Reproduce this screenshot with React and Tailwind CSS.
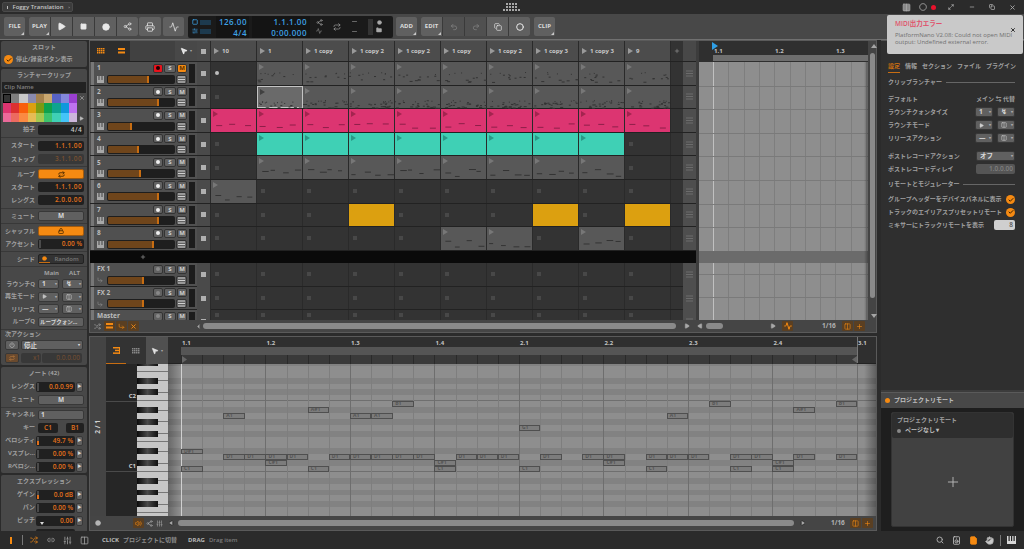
import React from 'react'
import { Play, Square, Circle, Printer, Undo2, Redo2, Copy, Search, Hand, File, X, Minus, Check, Plus, Repeat, SlidersVertical, Link2, Columns2, Maximize2, ChevronLeft, Volume2, Speaker, Share2, Activity, Folder, Power, Shuffle, CornerDownRight, MousePointer2, Lock } from 'lucide-react'

const ORANGE = '#f58a12'
const scenes = ['10', '1', '1 copy', '1 copy 2', '1 copy 2', '1 copy', '1 copy 2', '1 copy 3', '1 copy 3', '9']
const swatches = [
  '#333333', '#7f7f7f', '#c8c8c8', '#8a8aae', '#a5814c', '#c9a76f', '#5762c4', '#8488dc', '#9a3fd0',
  '#dc3571', '#dc3030', '#f95f0c', '#dca010', '#7b9a12', '#0ea24d', '#0fa38f', '#0f98dc', '#bf72f0',
  '#ea6a9a', '#ec6a60', '#fb8a42', '#e6bc55', '#a3c850', '#3cc36e', '#3fd0b5', '#44c4f8', '#cdb6dc',
]

// g grey clip, p pink, t teal, y yellow, s selected, c empty with dot, _ empty
const tracks = [
  { name: '1', vol: 62, cells: 'cggggggggg', rec: true, mute: true },
  { name: '2', vol: 78, cells: '_sgggggggg' },
  { name: '3', vol: 37, cells: 'pppppppppp' },
  { name: '4', vol: 47, cells: '_tttttttt_' },
  { name: '5', vol: 50, cells: '_gggggggg_' },
  { name: '6', vol: 78, cells: 'g_________' },
  { name: '7', vol: 78, cells: '___y___y_y' },
  { name: '8', vol: 70, cells: '_____gg_g_' },
]

const notes = [
  [0, 'D#1'], [0, 'C1'], [2, 'A1'], [2, 'D1'], [3, 'D1'], [4, 'D1'], [4, 'C#1'], [5, 'D1'], [6, 'C1'], [6, 'A#1'], [7, 'D1'],
  [8, 'A1'], [8, 'D1'], [9, 'A1'], [9, 'D1'], [10, 'B1'], [10, 'D1'], [11, 'D1'], [12, 'C#1'], [12, 'C1'], [13, 'D1'], [14, 'D1'], [15, 'D1'],
  [16, 'G1'], [16, 'C1'], [17, 'D1'], [19, 'D1'], [20, 'D1'], [20, 'C#1'], [22, 'D1'], [22, 'C1'], [23, 'A1'], [23, 'D1'], [24, 'D1'],
  [25, 'B1'], [26, 'D1'], [26, 'C1'], [27, 'D1'], [28, 'C#1'], [28, 'C1'], [29, 'A#1'], [29, 'D1'], [31, 'B1'], [31, 'D1'],
]
const pitchRow = { 'C1': 18, 'C#1': 17, 'D1': 16, 'D#1': 15, 'G1': 11, 'A1': 9, 'A#1': 8, 'B1': 7 }
const rows = Array.from({ length: 31 }, (_, i) => 30 - i) // F#2 at top
const isBlack = (p) => [1, 3, 6, 8, 10].includes(p % 12)

function rnd(n) {
  const v = Math.sin(n * 12.9898) * 43758.5453
  return v - Math.floor(v)
}

// little midi dashes inside a clip
function dashes(kind, seed, row) {
  const out = []
  const sparse = kind === 'p' || row === 4 || row === 7 || row === 5
  const n = kind === 'p' ? 3 : sparse ? 4 : row === 1 ? 26 : 12
  for (let i = 0; i < n; i++) {
    const a = rnd(seed * 31 + row * 7 + i), b = rnd(seed * 17 + row * 3 + i * 5)
    if (kind === 'p') out.push({ x: 2 + i * 15 + a * 4, y: 14 + b * 5, w: 6 })
    else if (sparse) out.push({ x: 2 + i * 11 + a * 4, y: 13 + b * 7, w: 4 + a * 3 })
    else if (row === 1) out.push({ x: a * 44, y: 14 + b * 8, w: 1 + Math.round(b * 2) })
    else out.push({ x: a * 44, y: 10 + b * 10, w: 1 + Math.round(b * 2) })
  }
  return out
}

function ClipTri({ color }) {
  return <svg width="6" height="7" viewBox="0 0 6 7" className="absolute left-[2px] top-[2px]"><polygon points="0,0 5,3 0,6" fill={color} /></svg>
}

function Clip({ kind, seed, row }) {
  if (kind === '_' || kind === 'c') {
    return (
      <div className="w-[46px] h-full shrink-0 flex items-center pl-[4px] bg-[#333333] border-r border-[#2a2a2a]">
        {kind === 'c'
          ? <span className="w-[4px] h-[4px] rounded-full bg-[#bdbdbd]" />
          : <span className="w-[4px] h-[4px] bg-[#484848]" />}
      </div>
    )
  }
  const styles = {
    g: ['bg-[#585858]', '#343434', '#777777'],
    s: ['bg-[#6a6a6a] border border-[#c4c4c4]', '#343434', '#404040'],
    p: ['bg-[#dc3571]', '#8e1f49', '#a3244f'],
    t: ['bg-[#3fd0b5]', '#2a8f7d', '#2a9a86'],
    y: ['bg-[#dca010]', '#9a7008', '#dca010'],
  }[kind]
  return (
    <div className={`relative w-[46px] h-full shrink-0 ${styles[0]} border-r border-[#2a2a2a]`}>
      <ClipTri color={styles[2]} />
      {kind !== 'y' && kind !== 't' && (
        <svg width="46" height="23" className="absolute inset-0">
          {dashes(kind, seed, row).map((d, i) => (
            <rect key={i} x={d.x} y={d.y} width={d.w} height="1" fill={styles[1]} />
          ))}
        </svg>
      )}
    </div>
  )
}

function GridIcon({ color = ORANGE }) {
  return (
    <svg width="8" height="6" viewBox="0 0 8 6" fill={color}>
      {[0, 2, 4].map((y) => [0, 2, 4, 6].map((x) => <rect key={`${x}${y}`} x={x} y={y} width="1.5" height="1.5" />))}
    </svg>
  )
}
function BarsIcon({ color = ORANGE }) {
  return <svg width="7" height="6" viewBox="0 0 7 6" fill={color}><rect width="7" height="2" /><rect y="3.5" width="7" height="2" /></svg>
}
function ListTabIcon() {
  return <svg width="7" height="7" viewBox="0 0 7 7" fill={ORANGE}><rect width="6" height="1.5" /><rect x="2" y="2.7" width="4" height="1.5" /><rect y="5.4" width="6" height="1.5" /><rect x="6" width="1" height="7" /></svg>
}

function MiniBtn({ children, on, red, w = 'w-[10px]' }) {
  const c = red ? 'bg-[#e8121c] text-black' : on ? 'bg-[#f58a12] text-[#5c3000]' : 'bg-[#626262] text-[#d0d0d0]'
  return <div className={`${w} h-[9px] rounded-[2px] flex items-center justify-center text-[6px] font-bold leading-none border border-[#333333] ${c}`}>{children}</div>
}

function MenuLines({ color = '#d0d0d0' }) {
  return (
    <svg width="7" height="7" viewBox="0 0 7 7"><rect y="0.5" width="7" height="1" fill={color} /><rect y="3" width="7" height="1" fill={color} /><rect y="5.5" width="7" height="1" fill={color} /></svg>
  )
}

function PianoIcon() {
  return <svg width="7" height="7" viewBox="0 0 7 7"><rect width="7" height="7" fill="#a8a8a8" /><rect x="1.5" width="1" height="4" fill="#444" /><rect x="4.5" width="1" height="4" fill="#444" /></svg>
}

function TrackHead({ t, fx, h }) {
  return (
    <div className={`flex ${h} w-[107px] shrink-0 bg-[#505050] overflow-hidden`}>
      <div className="w-[3px] ml-[1px] bg-[#777777] shrink-0" />
      <div className="flex-1 pl-[3px] pr-[2px] pt-[1px]">
        <div className="flex items-center justify-between h-[10px]">
          <span className="text-[6.5px] font-bold text-[#bdbdbd]">{t.name}</span>
          <div className="flex gap-[1px]">
            <MiniBtn red={t.rec}><span className={`w-[4px] h-[4px] rounded-full ${t.rec ? 'bg-[#220000]' : fx ? 'bg-[#888888]' : 'bg-[#efefef]'}`} /></MiniBtn>
            <MiniBtn w="w-[12px]">S</MiniBtn>
            <MiniBtn on={t.mute}>M</MiniBtn>
          </div>
        </div>
        <div className="flex items-center mt-[1px] h-[10px]">
          <span className="w-[8px] shrink-0">{fx ? <CornerDownRight size={6} color="#9a9a9a" /> : <PianoIcon />}</span>
          <div className="w-[68px] h-[9px] ml-[2px] rounded-[2px] bg-[#1e1e1e] p-[1px]">
            <div className="h-full bg-[#6f451b] border-r-2 border-[#c76d12] rounded-l-[1px]" style={{ width: `${t.vol}%` }} />
          </div>
          <div className="w-[11px] h-[9px] ml-[1px] rounded-[2px] bg-[#626262] border border-[#333333] flex items-center justify-center"><MenuLines /></div>
        </div>
      </div>
      <div className="w-[6px] my-[2px] mr-[2px] bg-[#1c1c1c] shrink-0" />
    </div>
  )
}

function StopCell({ h }) {
  return <div className={`w-[14px] ${h} shrink-0 bg-[#4a4a4a] flex items-center justify-center border-r border-[#2a2a2a]`}><span className="w-[5px] h-[5px] bg-[#b0b0b0]" /></div>
}

function Launcher() {
  return (
    <div className="w-[606px] flex flex-col bg-[#333333]">
      <div className="flex h-[21px] shrink-0 border-b border-[#222222]">
        <div className="w-[40px] bg-[#2d2d2d] flex items-center gap-[13px] pl-[7px]">
          <GridIcon />
          <BarsIcon />
        </div>
        <div className="w-[45px] bg-[#414141]" />
        <div className="w-[22px] bg-[#484848] flex items-center justify-center gap-[2px] text-white"><MousePointer2 size={8} fill="#e0e0e0" /><span className="text-[4px] text-[#aaaaaa]">▾</span></div>
        <StopCell h="h-full" />
        {scenes.map((s, i) => (
          <div key={i} className="w-[46px] bg-[#4c4c4c] border-r border-[#2a2a2a] flex items-center gap-[3px] pl-[3px] text-[6px] font-bold text-[#c8c8c8] whitespace-nowrap">
            <svg width="5" height="6" viewBox="0 0 5 6"><polygon points="0,0 5,3 0,6" fill="#9a9a9a" /></svg>{s}
          </div>
        ))}
        <div className="w-[12px] bg-[#333333] flex items-center justify-center"><Plus size={6} color="#aaaaaa" /></div>
        <div className="w-[13px] bg-[#484848]" />
      </div>
      {tracks.map((t, r) => (
        <div key={r} className="flex h-[23.6px] shrink-0 border-b border-[#222222]">
          <TrackHead t={t} h="h-full" />
          <StopCell h="h-full" />
          {t.cells.split('').map((c, i) => <Clip key={i} kind={c} seed={i + 1} row={r} />)}
          <div className="w-[12px] bg-[#333333]" />
          <div className="w-[13px] bg-[#4e4e4e] flex items-center justify-center"><MenuLines color="#6c6c6c" /></div>
        </div>
      ))}
      <div className="h-[12.5px] shrink-0 bg-[#0a0a0a] flex items-center pl-[50px]"><Plus size={6} color="#888888" strokeWidth={3} /></div>
      {['FX 1', 'FX 2', 'Master'].map((n, r) => (
        <div key={n} className={`flex shrink-0 border-b border-[#222222] ${r === 2 ? 'h-[11px] overflow-hidden' : 'h-[23.4px]'}`}>
          <TrackHead t={{ name: n, vol: 54 }} fx h={r === 2 ? 'h-[23.4px]' : 'h-full'} />
          <StopCell h="h-[23.4px]" />
          {scenes.map((_, i) => <Clip key={i} kind="_" seed={i} row={r} />)}
          <div className="w-[12px] bg-[#333333]" />
          <div className="w-[13px] h-[23.4px] bg-[#4e4e4e] flex items-center justify-center"><MenuLines color="#6c6c6c" /></div>
        </div>
      ))}
    </div>
  )
}

function Arranger() {
  return (
    <div className="w-[169px] flex flex-col">
      <div className="relative h-[21px] shrink-0 bg-[#2f2f2f] text-[6px] font-bold text-[#c4c4c4]">
        <span className="absolute left-[15px] top-[6px]">1.1</span>
        <span className="absolute left-[76px] top-[6px]">1.2</span>
        <span className="absolute left-[137px] top-[6px]">1.3</span>
        <svg width="6" height="8" viewBox="0 0 6 8" className="absolute left-[13px] top-[1px]"><polygon points="0,0 6,4 0,8" fill="#2f9fe6" /></svg>
        <div className="absolute left-[14px] right-0 top-[14px] h-[6px] bg-[#6e6e6e]" />
      </div>
      <div className="relative flex-1 bg-[#8e8e8e] overflow-hidden">
        {Array.from({ length: 11 }, (_, i) => (
          <div key={i} className="absolute top-0 bottom-0 w-px bg-[#7e7e7e]" style={{ left: 14 + i * 15.3 }} />
        ))}
        <div className="absolute top-0 bottom-0 left-[14px] w-px bg-[#c0c0c0]" />
        {[23.6, 47.2, 70.8, 94.4, 118, 141.6, 165.2, 212, 235].map((y) => (
          <div key={y} className="absolute left-0 right-0 h-px bg-[#7a7a7a]" style={{ top: y }} />
        ))}
        <div className="absolute left-0 right-0 top-[188.5px] h-[12.5px] bg-[#6b6b6b]" />
        <div className="absolute top-0 bottom-0 right-0 w-[4px] bg-gradient-to-l from-[#00000055] to-transparent" />
      </div>
    </div>
  )
}

function IconSquare({ children, on }) {
  return <div className={`w-[11px] h-[10px] flex items-center justify-center rounded-[1px] ${on ? 'bg-[#5a3f22]' : ''}`}>{children}</div>
}

function Scrollbar({ className }) {
  return <div className={`h-[6px] rounded-full bg-[#8a8a8a] ${className}`} />
}

function TopPanel() {
  return (
    <div className="h-[293px] shrink-0 flex flex-col bg-[#3c3c3c] border border-[#5a5a5a]">
      <div className="flex h-[279px] shrink-0">
        <Launcher />
        <div className="w-[3px] bg-[#3c3c3c]" />
        <Arranger />
        <div className="flex-1 relative bg-[#444444]">
          <div className="absolute top-[3px] left-[3px] border-x-[3px] border-x-transparent border-b-[4px] border-b-[#a5a5a5]" />
          <div className="absolute top-[12px] left-[2px] w-[5px] h-[245px] rounded-full bg-[#8a8a8a]" />
          <div className="absolute bottom-[2px] left-[3px] border-x-[3px] border-x-transparent border-t-[4px] border-t-[#a5a5a5]" />
        </div>
      </div>
      <div className="flex-1 flex items-center bg-[#454545] text-[#a8a8a8] relative">
        <div className="flex items-center gap-[1px] pl-[2px]">
          <IconSquare><Shuffle size={7} color="#a8a8a8" /></IconSquare>
          <IconSquare on><BarsIcon /></IconSquare>
          <IconSquare on><CornerDownRight size={7} color={ORANGE} /></IconSquare>
          <IconSquare on><X size={7} color={ORANGE} strokeWidth={3} /></IconSquare>
        </div>
        <ChevronLeft size={7} fill="#a8a8a8" className="ml-[56px]" />
        <Scrollbar className="w-[473px] ml-[1px]" />
        <Play size={6} fill="#a8a8a8" className="ml-[8px]" />
        <Play size={6} fill="#a8a8a8" className="ml-[7px] rotate-180" />
        <Scrollbar className="w-[17px] ml-[3px]" />
        <Play size={6} fill="#a8a8a8" className="ml-[47px]" />
        <span className="ml-[6px]"><IconSquare on><Activity size={8} color={ORANGE} strokeWidth={3} /></IconSquare></span>
        <span className="ml-[29px] text-[6.5px] font-bold text-[#b0b0b0]">1/16</span>
        <span className="ml-[6px]"><IconSquare on><Columns2 size={7} color={ORANGE} /></IconSquare></span>
        <div className="ml-[1px]"><IconSquare on><Plus size={7} color={ORANGE} /></IconSquare></div>
      </div>
    </div>
  )
}

function PianoRoll() {
  const beats = ['1.1', '1.2', '1.3', '1.4', '2.1', '2.2', '2.3', '2.4', '3.1']
  return (
    <div className="relative flex-1 flex flex-col overflow-hidden">
      {/* ruler */}
      <div className="relative h-[27px] shrink-0 bg-[#2f2f2f] text-[6px] font-bold text-[#c4c4c4] border-b border-[#222222]">
        {beats.map((b, i) => (
          <span key={b} className="absolute top-[2px]" style={{ left: 14 + i * 84.5 }}>{b}</span>
        ))}
        <div className="absolute left-[13px] w-[676px] top-[10px] h-[8px] bg-[#555555]" />
        <div className="absolute left-[13px] w-[676px] top-[18px] h-[9px] bg-[#3a3a3a]" />
        {Array.from({ length: 32 }, (_, i) => (
          <div key={i} className="absolute top-[18px] h-[9px] w-px bg-[#2a2a2a]" style={{ left: 13 + i * 21.12 }} />
        ))}
        <div className="absolute left-[689px] top-0 h-full w-px bg-[#777777]" />
        <svg width="5" height="7" viewBox="0 0 5 7" className="absolute left-[14px] top-[19px]"><polygon points="0,0 5,3.5 0,7" fill="#666666" /></svg>
        <svg width="5" height="7" viewBox="0 0 5 7" className="absolute left-[684px] top-[19px]"><polygon points="5,0 0,3.5 5,7" fill="#666666" /></svg>
      </div>
      {/* grid */}
      <div className="relative flex-1 overflow-hidden bg-[#8c8c8c]">
        <div className="-mt-[4px]">
          {rows.map((p) => (
            <div key={p} className={`h-[5.9px] ${isBlack(p) ? 'bg-[#828282]' : 'bg-[#8e8e8e]'} ${p % 12 === 0 ? 'border-b border-[#6f6f6f]' : ''}`} />
          ))}
        </div>
        {Array.from({ length: 34 }, (_, i) => (
          <div key={i} className={`absolute top-0 bottom-0 w-px ${i % 4 === 0 ? 'bg-[#6e6e6e]' : 'bg-[#7e7e7e]'}`} style={{ left: 13 + i * 21.12 }} />
        ))}
        <div className="absolute top-0 bottom-0 left-[13px] w-px bg-[#d0d0d0]" />
        <div className="absolute top-0 bottom-0 left-0 w-[12px] bg-gradient-to-r from-[#00000044] to-transparent" />
        {notes.map(([k, n], i) => (
          <div key={i} className="absolute h-[5.9px] w-[21.5px] bg-[#7c7c7c] border border-[#4f4f4f] text-[5px] leading-[3.9px] pl-[2px] text-[#555555] font-bold overflow-hidden"
            style={{ left: 13 + k * 21.12, top: pitchRow[n] * 5.9 - 4 }}>{n}</div>
        ))}
        <div className="absolute top-0 bottom-0 right-0 w-[12px] bg-gradient-to-l from-[#00000055] to-transparent" />
      </div>
    </div>
  )
}

function Keys() {
  return (
    <div className="w-[31px] shrink-0 overflow-hidden bg-[#c6c6c6]">
      <div className="-mt-[4px]">
        {rows.map((p) => {
          const m = p % 12
          return (
            <div key={p} className={`relative h-[5.9px] ${m === 0 || m === 5 ? 'border-b border-[#777777]' : ''}`}>
              {isBlack(p) && (
                <>
                  <div className="absolute left-[21px] right-0 top-[2.5px] h-px bg-[#777777]" />
                  <div className="absolute left-0 w-[21px] top-0 bottom-0 bg-gradient-to-r from-[#0a0a0a] via-[#4a4a4a] to-[#111111]" />
                </>
              )}
            </div>
          )
        })}
      </div>
    </div>
  )
}

function NoteEditor() {
  return (
    <div className="flex-1 flex flex-col bg-[#3c3c3c] border border-[#5a5a5a] overflow-hidden">
      <div className="flex-1 flex min-h-0">
        <div className="w-[16px] shrink-0 flex flex-col bg-[#444444]">
          <div className="flex-1 flex items-center justify-center">
            <span className="text-[6.5px] font-bold text-[#d0d0d0] -rotate-90 whitespace-nowrap">2 / 1</span>
          </div>
        </div>
        <div className="w-[62px] shrink-0 flex flex-col">
          <div className="h-[27px] shrink-0 flex">
            <div className="w-[40px] bg-[#333333] relative flex items-center gap-[12px] pl-[7px]">
              <ListTabIcon />
              <GridIcon color="#888888" />
              <span className="absolute left-0 bottom-0 w-[20px] h-px bg-[#c76d12]" />
            </div>
            <div className="w-[22px] bg-[#505050] flex items-center justify-center gap-[2px]"><MousePointer2 size={8} fill="#e0e0e0" color="#e0e0e0" /><span className="text-[4px] text-[#aaaaaa]">▾</span></div>
          </div>
          <div className="flex-1 flex min-h-0">
            <div className="w-[31px] shrink-0 bg-[#262626] relative text-[6px] font-bold text-[#d0d0d0]">
              <span className="absolute right-[1px] top-[28px]">C2</span>
              <div className="absolute left-0 right-0 top-[37px] h-px bg-[#4a4a4a]" />
              <span className="absolute right-[1px] top-[98px]">C1</span>
              <div className="absolute left-0 right-0 top-[107px] h-px bg-[#4a4a4a]" />
            </div>
            <Keys />
          </div>
        </div>
        <PianoRoll />
      </div>
      <div className="h-[14px] shrink-0 flex items-center bg-[#454545] relative">
        <Circle size={6} fill="#b5b5b5" color="#b5b5b5" className="ml-[5px]" />
        <div className="ml-[32px]"><IconSquare on><Volume2 size={7} color={ORANGE} /></IconSquare></div>
        <Share2 size={7} color="#a8a8a8" className="ml-[2px]" />
        <SlidersVertical size={7} color="#a8a8a8" className="ml-[3px]" />
        <Play size={6} fill="#a8a8a8" className="ml-[5px] rotate-180" />
        <Scrollbar className="w-[616px] ml-[4px]" />
        <Play size={6} fill="#a8a8a8" className="ml-[6px]" />
        <span className="ml-[25px] text-[6.5px] font-bold text-[#b0b0b0]">1/16</span>
        <span className="ml-[5px]"><IconSquare on><Columns2 size={7} color={ORANGE} /></IconSquare></span>
        <span className="ml-[1px]"><IconSquare on><Plus size={7} color={ORANGE} /></IconSquare></span>
      </div>
    </div>
  )
}

function Lbl({ children }) {
  return <span className="w-[34px] shrink-0 text-right text-[6px] font-bold text-[#a0a0a0] whitespace-nowrap">{children}</span>
}
function Val({ children, dim, className = '' }) {
  return <div className={`ml-[3px] w-[46px] h-[10px] rounded-[2px] bg-[#202020] text-right pr-[2px] text-[6.5px] tracking-[0.4px] leading-[10px] font-semibold ${dim ? 'text-[#7a5030]' : 'text-[#e0701c]'} ${className}`}>{children}</div>
}
function Row({ label, children, h = 'h-[13px]' }) {
  return <div className={`flex items-center ${h}`}><Lbl>{label}</Lbl>{children}</div>
}
function Btn({ children, className = '' }) {
  return <div className={`h-[10px] rounded-[2px] bg-[#606060] border border-[#383838] flex items-center justify-center text-[6.5px] font-bold text-[#d8d8d8] ${className}`}>{children}</div>
}
function Drop({ children, w = 'w-[21px]' }) {
  return <Btn className={`${w} !justify-start pl-[3px] gap-[2px]`}>{children}<span className="ml-auto mr-[1px] text-[4px] text-[#aaaaaa]">▾</span></Btn>
}
function SecHead({ children }) {
  return <div className="h-[13px] flex items-center justify-center text-[6px] font-bold text-[#a0a0a0]">{children}</div>
}
function Section({ children, className = '' }) {
  return <div className={`mx-[1px] mb-[2px] bg-[#484848] rounded-[2px] ${className}`}>{children}</div>
}
function Sep({ className = 'my-[1px]' }) {
  return <div className={`h-px bg-[#383838] ${className}`} />
}
function NudgeVal({ children, meter, pitch }) {
  return (
    <div className="flex items-center ml-[1px]">
      <div className="relative w-[39px] h-[10px] rounded-[2px] bg-[#202020] text-right pr-[2px] text-[6.5px] leading-[10px] font-semibold text-[#e0701c]">
        {!pitch && <span className="absolute left-[1px] top-[1px] w-[1.5px] h-[8px] bg-[#4a4a4a]" />}
        {pitch && <span className="absolute left-[4px] bottom-[1px] border-x-[2px] border-x-transparent border-t-[3px] border-t-[#d8d8d8]" />}
        {meter && <span className="absolute left-[1px] bottom-[1px] w-[1.5px] h-[4px] bg-[#e0701c]" />}
        {children}
      </div>
      <Btn className="w-[7px] ml-[1px]"><span className="text-[4px]">▶</span></Btn>
    </div>
  )
}
function CheckDot() {
  return <span className="w-[9px] h-[9px] rounded-full bg-[#f58a12] flex items-center justify-center shrink-0"><Check size={6} color="#3a2000" strokeWidth={4} /></span>
}

function LeftPanel() {
  return (
    <div className="w-[88px] shrink-0 overflow-hidden pt-[1px]">
      <Section className="h-[26px]">
        <SecHead>スロット</SecHead>
        <div className="flex items-center gap-[3px] pl-[3px] pt-[1px] text-[6px] font-bold text-[#a0a0a0] whitespace-nowrap"><CheckDot />停止/録音ボタン表示</div>
      </Section>
      <Section>
        <SecHead>ランチャークリップ</SecHead>
        <div className="mx-[1px] h-[11px] bg-[#222222] text-[6px] leading-[11px] pl-[2px] text-[#808080] font-semibold">Clip Name</div>
        <div className="flex items-start pl-[2px] pt-[1px] pb-[1px]">
          <div className="grid grid-cols-9 w-[74px]">
            {swatches.map((c, i) => (
              <div key={i} className={`h-[9.3px] ${i === 0 ? 'border border-black' : ''}`} style={{ background: c }} />
            ))}
          </div>
          <div className="flex flex-col items-center ml-[1px] text-[#a0a0a0] w-[7px] h-[28px] justify-between py-[1px]">
            <X size={6} strokeWidth={3} /><Play size={5} fill="#c0c0c0" />
          </div>
        </div>
        <Row label="拍子"><Val className="!text-[#c4c4c4]">4/4</Val></Row>
        <Sep />
        <Row label="スタート" h="h-[13.5px]"><Val>1.1.1.00</Val></Row>
        <Row label="ストップ"><Val dim className="!bg-[#383838]">3.1.1.00</Val></Row>
        <Sep className="my-[0.5px]" />
        <Row label="ループ"><Btn className="ml-[3px] w-[46px] !bg-[#f58a12] !border-[#a05a10]"><Repeat size={7} color="#4a2a00" strokeWidth={3} /></Btn></Row>
        <Row label="スタート"><Val>1.1.1.00</Val></Row>
        <Row label="レングス"><Val>2.0.0.00</Val></Row>
        <Sep />
        <Row label="ミュート"><Btn className="ml-[3px] w-[46px]">M</Btn></Row>
        <Sep className="my-[0.5px]" />
        <Row label="シャッフル"><Btn className="ml-[3px] w-[46px] !bg-[#f58a12] !border-[#a05a10]"><Lock size={6} color="#4a2a00" strokeWidth={3} /></Btn></Row>
        <Row label="アクセント"><div className="ml-[3px] w-[46px]"><div className="relative h-[10px] rounded-[2px] bg-[#202020] text-right pr-[2px] text-[6.5px] leading-[10px] font-semibold text-[#e0701c]"><span className="absolute left-[1px] top-[1px] w-[1.5px] h-[8px] bg-[#4a4a4a]" />0.00 %</div></div></Row>
        <Sep className="my-[0.5px]" />
        <Row label="シード"><div className="ml-[3px] w-[46px] h-[10px] flex items-center rounded-[2px] bg-[#333333] border border-[#222222] text-[6px] font-semibold text-[#787878]"><span className="w-[11px] h-full flex items-center justify-center border-b border-[#c76d12]"><Circle size={5} fill={ORANGE} color={ORANGE} /></span><span className="flex-1 text-center">Random</span></div></Row>
        <Sep className="my-[0.7px]" />
        <div className="flex h-[10px] text-[6px] leading-[10px] font-bold text-[#a0a0a0]"><span className="ml-[43px] w-[22px]">Main</span><span className="ml-[3px]">ALT</span></div>
        <Row label="ラウンチQ" h="h-[12.5px]"><span className="ml-[3px]"><Drop>1</Drop></span><span className="ml-[3px]"><Drop>↯</Drop></span></Row>
        <Row label="再生モード" h="h-[12.5px]"><span className="ml-[3px]"><Drop><Play size={5} fill="#c0c0c0" /></Drop></span><span className="ml-[3px]"><Drop><Columns2 size={6} /></Drop></span></Row>
        <Row label="リリース" h="h-[12.5px]"><span className="ml-[3px]"><Drop>—</Drop></span><span className="ml-[3px]"><Drop><Columns2 size={6} /></Drop></span></Row>
        <Row label="ループQ" h="h-[12.5px]"><Btn className="ml-[3px] w-[46px] !text-[5.5px] overflow-hidden whitespace-nowrap !justify-start pl-[1px]">ループクォン...</Btn></Row>
        <Sep className="my-[0.8px]" />
        <div className="h-[9px] flex items-center pl-[4px] text-[6px] font-bold text-[#a0a0a0]">次アクション</div>
        <div className="flex items-center h-[12px] pl-[4px]"><Btn className="w-[14px]"><Power size={6} /></Btn><Btn className="ml-[2px] w-[62px] !justify-start pl-[2px]">停止<span className="ml-auto mr-[2px] text-[4px]">▾</span></Btn></div>
        <div className="flex items-center h-[14px] pl-[4px]"><Btn className="w-[14px] !bg-[#6a4a2e]"><Repeat size={6} color="#c08040" /></Btn><div className="ml-[2px] w-[20px] h-[10px] bg-[#383838] rounded-[2px] text-right pr-[1px] text-[6.5px] leading-[10px] text-[#7a5030]">x1</div><div className="ml-[1px] w-[40px] h-[10px] bg-[#383838] rounded-[2px] text-right pr-[2px] text-[6.5px] leading-[10px] text-[#7a5030]">0.0.0.00</div></div>
      </Section>
      <Section>
        <SecHead>ノート (42)</SecHead>
        <Row label="レングス"><NudgeVal>0.0.0.99</NudgeVal></Row>
        <Row label="ミュート"><Btn className="ml-[3px] w-[46px]">M</Btn></Row>
        <Sep className="my-[0.5px]" />
        <Row label="チャンネル"><Btn className="ml-[3px] w-[46px] !justify-start pl-[2px]">1</Btn></Row>
        <Row label="キー"><div className="ml-[3px] w-[20px] h-[10px] bg-[#202020] rounded-[2px] text-center text-[6.5px] leading-[10px] font-semibold text-[#e0701c]">C1</div><div className="ml-[8px] w-[18px] h-[10px] bg-[#202020] rounded-[2px] text-center text-[6.5px] leading-[10px] font-semibold text-[#e0701c]">B1</div></Row>
        <Row label="ベロシティ"><NudgeVal meter>49.7 %</NudgeVal></Row>
        <Row label="Vスプレ..."><NudgeVal>0.00 %</NudgeVal></Row>
        <Row label="Rベロシ..."><NudgeVal>0.00 %</NudgeVal></Row>
      </Section>
      <Section>
        <SecHead>エクスプレッション</SecHead>
        <Row label="ゲイン"><NudgeVal meter>0.0 dB</NudgeVal></Row>
        <Row label="パン"><NudgeVal>0.00 %</NudgeVal></Row>
        <Row label="ピッチ"><NudgeVal pitch>0.00</NudgeVal></Row>
        <Row label=""><div className="ml-[1px] w-[39px] h-[10px] rounded-[2px] bg-[#202020]" /></Row>
      </Section>
    </div>
  )
}

function RLabel({ children, className = '' }) {
  return <span className={`text-[6px] font-bold text-[#a0a0a0] whitespace-nowrap ${className}`}>{children}</span>
}
function RHead({ children }) {
  return <div className="flex items-center gap-[4px]"><RLabel>{children}</RLabel><div className="flex-1 h-px bg-[#666666]" /></div>
}

function RightPanel() {
  return (
    <div className="w-[143px] shrink-0 flex flex-col">
      <div className="h-[350px] shrink-0 bg-[#2f2f2f] border-t border-[#555555] pl-[7px] pr-[9px] pt-[21px]">
        <div className="flex gap-[5px] text-[6px] font-bold text-[#a0a0a0] whitespace-nowrap">
          <span className="text-[#c76d12] border-b border-[#c76d12] pb-[1px]">設定</span><span>情報</span><span>セクション</span><span>ファイル</span><span>プラグイン</span>
        </div>
        <div className="mt-[4.5px]"><RHead>クリップランチャー</RHead></div>
        <div className="flex justify-between mt-[6px] h-[13px] items-center"><RLabel>デフォルト</RLabel><RLabel>メイン ⇆ 代替</RLabel></div>
        <div className="flex justify-between h-[13px] items-center"><RLabel>ラウンチクォンタイズ</RLabel><span className="flex gap-[4px]"><Drop w="w-[18px]">1</Drop><Drop w="w-[18px]">↯</Drop></span></div>
        <div className="flex justify-between h-[13px] items-center"><RLabel>ラウンチモード</RLabel><span className="flex gap-[4px]"><Drop w="w-[18px]"><Play size={5} fill="#d0d0d0" /></Drop><Drop w="w-[18px]"><Columns2 size={6} /></Drop></span></div>
        <div className="flex justify-between h-[13px] items-center"><RLabel>リリースアクション</RLabel><span className="flex gap-[4px]"><Drop w="w-[18px]">—</Drop><Drop w="w-[18px]"><Columns2 size={6} /></Drop></span></div>
        <div className="flex justify-between h-[13px] items-center mt-[5px]"><RLabel>ポストレコードアクション</RLabel><Drop w="w-[39px]">オフ</Drop></div>
        <div className="flex justify-between h-[13px] items-center"><RLabel>ポストレコードディレイ</RLabel><div className="w-[39px] h-[10px] bg-[#555555] rounded-[2px] text-right pr-[2px] text-[6.5px] leading-[10px] font-semibold text-[#808080]">1.0.0.00</div></div>
        <div className="mt-[2px] h-[13px] flex items-center"><div className="flex-1"><RHead>リモートとモジュレーター</RHead></div></div>
        <div className="flex justify-between h-[12.5px] items-center mt-[3px]"><RLabel>グループヘッダーをデバイスパネルに表示</RLabel><CheckDot /></div>
        <div className="flex justify-between h-[12.5px] items-center"><RLabel>トラックのエイリアスプリセットリモート</RLabel><CheckDot /></div>
        <div className="flex justify-between h-[13px] items-center"><RLabel>ミキサーにトラックリモートを表示</RLabel><div className="w-[21px] h-[10px] bg-[#cfcfcf] rounded-[2px] text-right pr-[2px] text-[6.5px] leading-[10px] font-semibold text-[#555555]">8</div></div>
      </div>
      <div className="h-[2px] bg-[#3c3c3c]" />
      <div className="flex-1 flex flex-col bg-[#1e1e1e] border-t border-[#5a5a5a]">
        <div className="h-[15px] shrink-0 bg-[#484848] flex items-center gap-[4px] pl-[4px]">
          <span className="w-[5px] h-[5px] rounded-full bg-[#f58a12]" /><RLabel className="!text-[#c0c0c0]">プロジェクトリモート</RLabel>
        </div>
        <div className="flex-1 px-[10px] py-[4px] flex">
          <div className="flex-1 flex flex-col bg-[#414141] rounded-[2px] border border-[#333333]">
            <div className="h-[25px] shrink-0 bg-[#2e2e2e] rounded-[2px] pl-[5px] pt-[3px]">
              <RLabel className="block">プロジェクトリモート</RLabel>
              <div className="flex items-center gap-[4px] mt-[1px]"><span className="w-[4px] h-[4px] rounded-full bg-[#888888]" /><RLabel className="!text-[#c0c0c0]">ページなし ▾</RLabel></div>
            </div>
            <div className="flex-1 flex items-center justify-center"><Plus size={16} color="#b8b8b8" strokeWidth={1.4} /></div>
          </div>
        </div>
      </div>
    </div>
  )
}

function ToolBtn({ children, className = '' }) {
  return <div className={`h-[19px] flex items-center justify-center bg-[#606060] text-[6px] font-bold text-[#d8d8d8] ${className}`}>{children}</div>
}
function MenuBtn({ children, className = '' }) {
  return (
    <div className={`relative h-[19px] w-[21px] flex items-center justify-center bg-[#606060] text-[6px] font-bold text-[#dcdcdc] rounded-[2px] ${className}`}>
      {children}
      <span className="absolute right-[1px] bottom-[1px] w-0 h-0 border-l-[3px] border-l-transparent border-b-[3px] border-b-[#c8c8c8]" />
    </div>
  )
}

function Toolbar() {
  return (
    <div className="h-[26px] shrink-0 flex items-center bg-[#484848] border-b border-[#707070] relative">
      <MenuBtn className="ml-[4px]">FILE</MenuBtn>
      <div className="ml-[4px] flex gap-px rounded-[2px] overflow-hidden bg-[#3a3a3a]">
        <MenuBtn className="!rounded-none">PLAY</MenuBtn>
        <ToolBtn className="w-[21px]"><Play size={9} fill="#e8e8e8" color="#e8e8e8" /></ToolBtn>
        <ToolBtn className="w-[21px]"><Square size={7} fill="#e8e8e8" color="#e8e8e8" /></ToolBtn>
        <ToolBtn className="w-[21px]"><Circle size={8} fill="#e8e8e8" color="#e8e8e8" /></ToolBtn>
        <ToolBtn className="w-[21px]"><Share2 size={9} color="#e0e0e0" /></ToolBtn>
      </div>
      <ToolBtn className="ml-[1px] w-[22px] rounded-[2px]"><Printer size={10} color="#e0e0e0" /></ToolBtn>
      <ToolBtn className="ml-[2px] w-[21px] rounded-[2px]"><Activity size={10} color="#e0e0e0" /></ToolBtn>
      {/* transport display */}
      <div className="ml-[4px] w-[205px] h-[22px] flex bg-[#1a1a1a] rounded-[2px] text-[8px] tracking-[0.5px] font-semibold text-[#3ea2e6] leading-[10px]">
        <div className="w-[26px] flex flex-col justify-around pl-[4px] py-[2px]">
          <div className="flex items-center gap-[2px]"><Square size={6} color="#3ea2e6" strokeWidth={3} /><span className="w-[11px] h-[5px] bg-[#1d3a4e]" /></div>
          <div className="flex items-center gap-[2px]"><SlidersVertical size={6} color="#3ea2e6" className="rotate-90" /><span className="w-[11px] h-[5px] bg-[#1d3a4e]" /></div>
        </div>
        <div className="ml-[2px] w-[33px] bg-[#141414] text-right pr-[2px] pt-[1px]"><div>126.00</div><div className="mt-[1px]">4/4</div></div>
        <div className="ml-[3px] w-[58px] bg-[#141414] text-right pr-[3px] pt-[1px]"><div>1.1.1.00</div><div className="mt-[1px]">0:00.000</div></div>
        <div className="flex items-center gap-[10px] pl-[6px] text-[#a0a0a0]">
          <div className="flex flex-col gap-[2px]"><Share2 size={7} /><Activity size={6} /></div>
          <Repeat size={8} />
          <div className="flex flex-col gap-[3px]"><Minus size={7} /><Minus size={7} /></div>
          <div className="w-[5px] h-[16px] bg-[#333333]" />
          <div className="flex flex-col items-center gap-[2px] -ml-[7px]"><Circle size={5} fill="#a8a8a8" /><Folder size={6} fill="#a8a8a8" /></div>
        </div>
      </div>
      <MenuBtn className="ml-[3px]">ADD</MenuBtn>
      <div className="ml-[4px] flex gap-px rounded-[2px] overflow-hidden bg-[#3a3a3a]">
        <MenuBtn className="!rounded-none">EDIT</MenuBtn>
        <ToolBtn className="w-[21px] !bg-[#505050]"><Undo2 size={8} color="#8a8a8a" /></ToolBtn>
        <ToolBtn className="w-[21px] !bg-[#505050]"><Redo2 size={8} color="#8a8a8a" /></ToolBtn>
        <ToolBtn className="w-[21px]"><Copy size={8} color="#e8e8e8" /></ToolBtn>
        <ToolBtn className="w-[21px]"><Circle size={8} color="#e8e8e8" strokeWidth={3} /></ToolBtn>
      </div>
      <MenuBtn className="ml-[4px]">CLIP</MenuBtn>
    </div>
  )
}

function TitleBar() {
  return (
    <div className="h-[14px] shrink-0 relative flex items-center bg-[#2b2b2b]">
      <div className="ml-[2px] w-[71px] h-[10px] flex items-center gap-[4px] pl-[4px] rounded-[2px] bg-[#3c3c3c] border border-[#4a4a4a] text-[6px] font-semibold text-[#c4c4c4] whitespace-nowrap">
        <span className="w-[3px] h-[3px] bg-[#bbbbbb]" />Foggy Translation<X size={5} className="ml-auto mr-[2px]" strokeWidth={3} />
      </div>
      <div className="ml-[430px] grid grid-cols-6 gap-px w-[17px]">
        {[0, 1, 2, 3, 4, 5, 6, 7, 8, 9, 10, 11, 12, 13, 14, 15, 16, 17].map((i) => (
          <span key={i} className={`w-[2px] h-[2px] ${[0, 5, 6, 11].includes(i) ? 'bg-transparent' : 'bg-[#a8a8a8]'}`} />
        ))}
      </div>
      <div className="ml-auto flex items-center text-[#aaaaaa]">
        <Columns2 size={9} fill="#888888" className="mr-[8px]" />
        <Circle size={8} className="mr-[4px]" strokeDasharray="2 1" />
        <span className="w-[5px] h-[5px] rounded-full bg-[#e8122c] mr-[12px]" />
        <Maximize2 size={6} className="mr-[15px]" strokeWidth={3} />
        <Minus size={6} className="mr-[14px]" strokeWidth={3} />
        <Copy size={6} className="mr-[14px]" strokeWidth={3} />
        <X size={7} className="mr-[8px]" strokeWidth={3} />
      </div>
    </div>
  )
}

function StatusBar() {
  return (
    <div className="h-[18px] shrink-0 flex items-center bg-[#2b2b2b] text-[#a8a8a8]">
      <span className="ml-[10px] w-[2px] h-[7px] bg-[#f58a12]" />
      <span className="ml-[10px] w-px h-[10px] bg-[#777777]" />
      <Shuffle size={8} color={ORANGE} className="ml-[7px]" />
      <Link2 size={8} className="ml-[9px]" />
      <SlidersVertical size={9} className="ml-[8px]" />
      <Columns2 size={9} className="ml-[8px]" />
      <span className="ml-[13px] text-[6px] font-bold text-[#b8b8b8]">CLICK</span>
      <span className="ml-[4px] text-[6px] font-semibold text-[#8c8c8c]">プロジェクトに切替</span>
      <span className="ml-[11px] text-[6px] font-bold text-[#b8b8b8]">DRAG</span>
      <span className="ml-[4px] text-[6px] font-semibold text-[#7c7c7c]">Drag item</span>
      <div className="ml-auto flex items-center">
        <Search size={8} strokeWidth={3} />
        <Speaker size={9} className="ml-[8px]" color="#d0d0d0" />
        <File size={9} fill={ORANGE} color={ORANGE} className="ml-[8px]" />
        <Hand size={9} fill="#c8c8c8" className="ml-[7px]" />
        <span className="ml-[6px] w-px h-[11px] bg-[#777777]" />
        <span className="ml-[6px] mr-[8px]"><svg width="9" height="8" viewBox="0 0 9 8"><rect width="9" height="8" fill="#d8d8d8" /><rect x="1.5" width="1.2" height="5" fill="#222" /><rect x="4" width="1.2" height="5" fill="#222" /><rect x="6.5" width="1.2" height="5" fill="#222" /></svg></span>
      </div>
    </div>
  )
}

export default function App() {
  return (
    <div className="relative w-[1024px] h-[549px] overflow-hidden flex flex-col bg-[#2b2b2b] [font-family:'Open_Sans','Noto_Sans_CJK_JP',sans-serif]">
      <TitleBar />
      <Toolbar />
      <div className="flex h-[491px] shrink-0">
        <LeftPanel />
        <div className="w-[790px] shrink-0 flex flex-col gap-[3px] pl-[1px] pr-[1px]">
          <TopPanel />
          <NoteEditor />
        </div>
        <div className="w-[3px]" />
        <RightPanel />
      </div>
      <StatusBar />

      {/* notification toast */}
      <div className="absolute left-[887px] top-[15px] w-[136px] h-[39px] bg-[#c9c9c9] rounded-[2px] pl-[8px] pr-[4px] pt-[4px]">
        <div className="text-[6.5px] leading-[9px] font-semibold text-[#e0506a]">MIDI出力エラー</div>
        <div className="mt-[4px] text-[6px] leading-[7px] text-[#707070] whitespace-nowrap">PlatformNano V2.08: Could not open MIDI<br />output: Undefined external error.</div>
        <X size={6} color="#333333" strokeWidth={4} className="absolute right-[7px] top-[12px]" />
      </div>
    </div>
  )
}
